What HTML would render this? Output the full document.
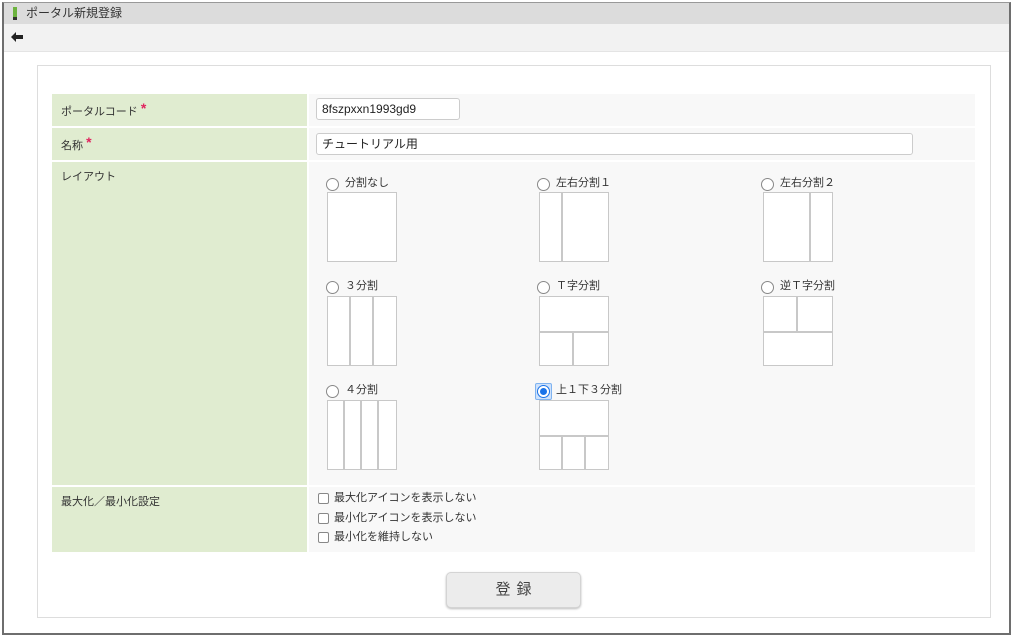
<!DOCTYPE html>
<html><head><meta charset="utf-8"><style>
*{box-sizing:border-box;margin:0;padding:0}
body{width:1016px;height:643px;background:#fff;font-family:"Liberation Sans","Noto Sans CJK JP",sans-serif;font-size:11px;color:#333;position:relative;overflow:hidden}
.frame{position:absolute;left:2px;top:2px;width:1009px;height:633px;border:2px solid #6e6e6e;border-top:1px solid #999}
.title{position:absolute;left:4px;top:3px;width:1005px;height:21px;background:#dcdcdc;font-size:12px;line-height:21px;padding-left:22px}
.title i{position:absolute;left:9px;top:4px;width:4px;height:13px;background:#6db33f}
.title i:after{content:"";position:absolute;left:0;bottom:0;width:4px;height:3px;background:#333}
.tool{position:absolute;left:4px;top:24px;width:1005px;height:28px;background:#f2f2f2;border-bottom:1px solid #e4e4e4}
.panel{position:absolute;left:37px;top:65px;width:954px;height:553px;border:1px solid #ddd}
.lab{position:absolute;left:52px;width:255px;background:#e0ecd0;padding:6px 9px}
.val{position:absolute;left:309px;width:666px;background:#f8f8f8}
.star{color:#e0245e;font-size:14px;font-weight:bold;vertical-align:2px}
.inp{position:absolute;height:22px;border:1px solid #ccc;border-radius:3px;background:#fff;font-size:12px;line-height:20px;padding-left:5px;color:#222}
.rad{position:absolute;width:13px;height:13px;border:1px solid #888;border-radius:50%;background:#fff}
.rl{position:absolute;font-size:11px;line-height:13px}
.box{position:absolute;width:70px;height:70px;border:1.5px solid #c8c8c8;background:#fff;overflow:hidden}
.box b{position:absolute;background:#c8c8c8}
.cb{position:absolute;width:11px;height:11px;border:1px solid #888;border-radius:2px;background:#fff}
.btn{position:absolute;left:446px;top:572px;width:135px;height:36px;border:1px solid #d4d4d4;border-radius:5px;background:#ececec;box-shadow:0 1px 2px #bbb;text-align:center;line-height:34px;font-size:15px;letter-spacing:6px;color:#444;padding-left:6px}
</style></head><body>
<div class="frame"></div>
<div class="title"><i></i>ポータル新規登録</div>
<div class="tool"><svg style="position:absolute;left:7px;top:8px" width="12" height="10" viewBox="0 0 12 10"><path d="M0 5 L5 0 L5 3 L12 3 L12 7 L5 7 L5 10 Z" fill="#222"/></svg></div>
<div class="panel"></div>
<div class="lab" style="top:94px;height:32px">ポータルコード <span class="star">*</span></div>
<div class="val" style="top:94px;height:32px"></div>
<div class="inp" style="left:316px;top:98px;width:144px">8fszpxxn1993gd9</div>
<div class="lab" style="top:128px;height:32px">名称 <span class="star">*</span></div>
<div class="val" style="top:128px;height:32px"></div>
<div class="inp" style="left:316px;top:133px;width:597px">チュートリアル用</div>
<div class="lab" style="top:162px;height:323px">レイアウト</div>
<div class="val" style="top:162px;height:323px"></div>
<div class="lab" style="top:487px;height:65px">最大化／最小化設定</div>
<div class="val" style="top:487px;height:65px"></div>

<div class="rad" style="left:326px;top:178px"></div><div class="rl" style="left:345px;top:177px">分割なし</div>
<div class="box" style="left:327px;top:192px"></div>
<div class="rad" style="left:537px;top:178px"></div><div class="rl" style="left:556px;top:177px">左右分割１</div>
<div class="box" style="left:539px;top:192px"><b style="left:21px;top:0;width:1.5px;height:100%"></b></div>
<div class="rad" style="left:761px;top:178px"></div><div class="rl" style="left:780px;top:177px">左右分割２</div>
<div class="box" style="left:763px;top:192px"><b style="left:45px;top:0;width:1.5px;height:100%"></b></div>

<div class="rad" style="left:326px;top:281px"></div><div class="rl" style="left:345px;top:280px">３分割</div>
<div class="box" style="left:327px;top:296px"><b style="left:21px;top:0;width:1.5px;height:100%"></b><b style="left:44px;top:0;width:1.5px;height:100%"></b></div>
<div class="rad" style="left:537px;top:281px"></div><div class="rl" style="left:556px;top:280px">Ｔ字分割</div>
<div class="box" style="left:539px;top:296px"><b style="left:0;top:34px;width:100%;height:1.5px"></b><b style="left:32px;top:34px;width:1.5px;height:36px"></b></div>
<div class="rad" style="left:761px;top:281px"></div><div class="rl" style="left:780px;top:280px">逆Ｔ字分割</div>
<div class="box" style="left:763px;top:296px"><b style="left:0;top:34px;width:100%;height:1.5px"></b><b style="left:32px;top:0;width:1.5px;height:34px"></b></div>

<div class="rad" style="left:326px;top:385px"></div><div class="rl" style="left:345px;top:384px">４分割</div>
<div class="box" style="left:327px;top:400px"><b style="left:15px;top:0;width:1.5px;height:100%"></b><b style="left:32px;top:0;width:1.5px;height:100%"></b><b style="left:49px;top:0;width:1.5px;height:100%"></b></div>
<div style="position:absolute;left:535px;top:383px;width:17px;height:17px;border:1px solid #7fb3f0;background:#cfe2fb;border-radius:2px"></div>
<div class="rad" style="left:537px;top:385px;border-color:#1a73e8"></div><div style="position:absolute;left:540px;top:388px;width:7px;height:7px;border-radius:50%;background:#1a73e8"></div>
<div class="rl" style="left:556px;top:384px">上１下３分割</div>
<div class="box" style="left:539px;top:400px"><b style="left:0;top:34px;width:100%;height:1.5px"></b><b style="left:21px;top:34px;width:1.5px;height:36px"></b><b style="left:44px;top:34px;width:1.5px;height:36px"></b></div>

<div class="cb" style="left:318px;top:493px"></div><div class="rl" style="left:334px;top:492px">最大化アイコンを表示しない</div>
<div class="cb" style="left:318px;top:513px"></div><div class="rl" style="left:334px;top:512px">最小化アイコンを表示しない</div>
<div class="cb" style="left:318px;top:532px"></div><div class="rl" style="left:334px;top:531px">最小化を維持しない</div>

<div class="btn">登録</div>
</body></html>
